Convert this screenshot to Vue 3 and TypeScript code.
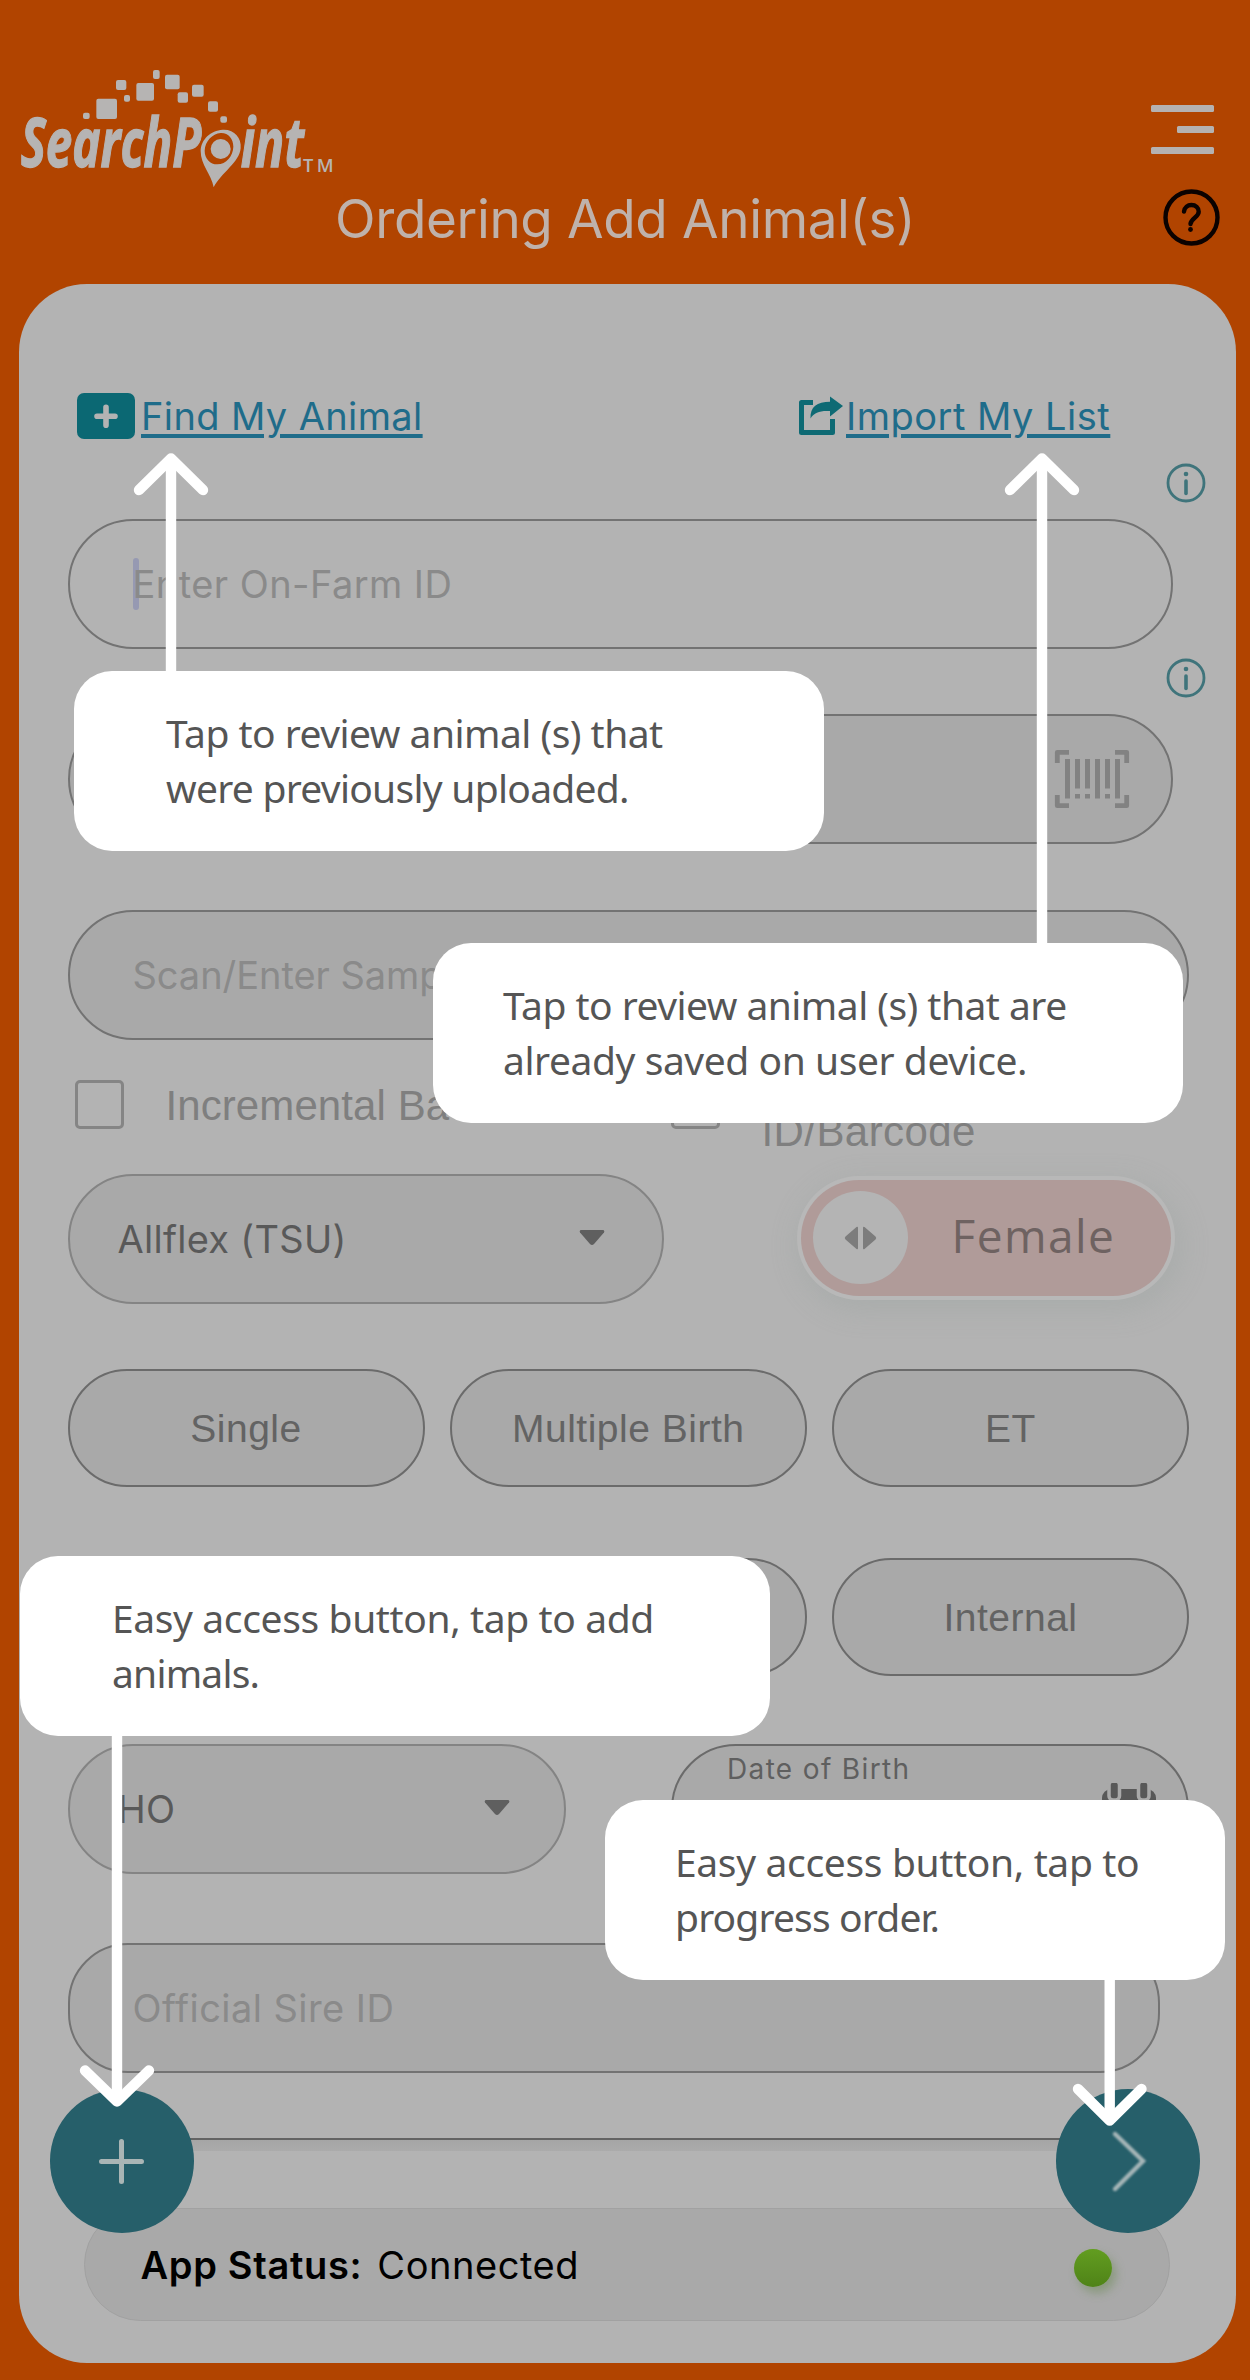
<script setup lang="ts">
interface CalloutLine {
  text: string
  tracking: number
}

interface Callout {
  id: string
  lines: CalloutLine[]
}

const callouts: Callout[] = [
  {
    id: 'find',
    lines: [
      { text: 'Tap to review animal (s) that', tracking: -0.52 },
      { text: 'were previously uploaded.', tracking: -0.73 },
    ],
  },
  {
    id: 'import',
    lines: [
      { text: 'Tap to review animal (s) that are', tracking: -0.53 },
      { text: 'already saved on user device.', tracking: -0.44 },
    ],
  },
  {
    id: 'add',
    lines: [
      { text: 'Easy access button, tap to add', tracking: -0.38 },
      { text: 'animals.', tracking: -0.8 },
    ],
  },
  {
    id: 'progress',
    lines: [
      { text: 'Easy access button, tap to', tracking: -0.35 },
      { text: 'progress order.', tracking: -0.85 },
    ],
  },
]

const birthTypes: string[] = ['Single', 'Multiple Birth', 'ET']
const sireTypes: string[] = ['', '', 'Internal']

const logoSquares: number[][] = [
  [249, 188, 20, 19],
  [289, 146, 62, 61],
  [348, 90, 31, 30],
  [372, 135, 18, 20],
  [409, 99, 53, 53],
  [459, 60, 20, 27],
  [495, 74, 44, 44],
  [533, 127, 31, 31],
  [576, 104, 35, 36],
  [624, 154, 30, 31],
  [661, 199, 20, 19],
]

const barcodeBars: { x: number; split: boolean }[] = [
  { x: 11, split: false },
  { x: 21, split: true },
  { x: 31, split: true },
  { x: 41, split: false },
  { x: 51, split: true },
  { x: 61, split: false },
]
</script>

<template>
  <div class="screen">
    <header class="header">
      <div class="brand-row">
        <svg class="logo" viewBox="0 0 1050 417" fill="#b6b4b3">
          <rect v-for="(s, i) in logoSquares" :key="i" :x="s[0]" :y="s[1]" :width="s[2]" :height="s[3]" rx="6" />
          <text class="logo-text" x="62" y="352" textLength="542" lengthAdjust="spacingAndGlyphs">SearchP</text>
          <text class="logo-text" x="722" y="352" textLength="190" lengthAdjust="spacingAndGlyphs">int</text>
          <text class="logo-tm" x="909" y="366" textLength="92" lengthAdjust="spacing">TM</text>
          <path
            fill-rule="evenodd"
            d="M668 239C702 237 725 262 722 295C718 338 664 368 641 412C634 372 602 345 602 303C603 268 632 241 668 239ZM662 249C637 251 615 274 614 302C614 326 630 343 652 343C679 342 699 319 700 290C700 266 685 248 662 249Z"
          />
          <ellipse cx="662" cy="297" rx="30" ry="30" />
        </svg>
        <div class="menu"><i></i><i class="short"></i><i></i></div>
      </div>
      <div class="title-row">
        <h1 class="title">Ordering Add Animal(s)</h1>
        <svg class="help" viewBox="0 0 57 57" fill="none" stroke="#0b0200">
          <circle cx="28.5" cy="28.5" r="26" stroke-width="4.4" />
          <path d="M21 22.500c.6-4.400 3.800-6.500 7.300-6.500 4.400 0 7.400 2.800 7.400 6.700 0 5.600-7.700 6.300-8.200 12.300" stroke-width="4.400" stroke-linecap="round" />
          <circle cx="27.500" cy="40.500" r="2.400" fill="#0b0200" stroke="none" />
        </svg>
      </div>
    </header>

    <main class="card">
      <div class="links">
        <div class="link-find">
          <svg class="plus-box" viewBox="0 0 58 46">
            <rect width="58" height="46" rx="7" fill="#0b6873" />
            <path d="M29 14.200v18M20 23.200h18" stroke="#b3b3b3" stroke-width="5.600" stroke-linecap="round" />
          </svg>
          <a class="link">Find My Animal</a>
        </div>
        <div class="link-import">
          <svg class="share" viewBox="0 0 46 46">
            <path d="M14 9.500H2.500V39.500H33.500V26" fill="none" stroke="#0e6a74" stroke-width="5" stroke-linejoin="round" />
            <path d="M11.500 25.500C11 14 18 8.800 31 8.800V3.500L44 13 31 23.500V18C21 17.500 15.500 19 11.500 25.500Z" fill="#0e6a74" />
          </svg>
          <a class="link import-text">Import My List</a>
        </div>
      </div>

      <svg class="info info-first" viewBox="0 0 40 40">
        <circle cx="20" cy="20" r="18" fill="none" stroke="#3f747b" stroke-width="2.800" />
        <path d="M20 18v12.500" stroke="#3f747b" stroke-width="3.600" stroke-linecap="round" />
        <circle cx="20" cy="11" r="2.300" fill="#3f747b" />
      </svg>

      <div class="field farm">
        <span class="cursor"></span>
        <span class="placeholder">Enter On-Farm ID</span>
      </div>

      <svg class="info info-second" viewBox="0 0 40 40">
        <circle cx="20" cy="20" r="18" fill="none" stroke="#3f747b" stroke-width="2.800" />
        <path d="M20 18v12.500" stroke="#3f747b" stroke-width="3.600" stroke-linecap="round" />
        <circle cx="20" cy="11" r="2.300" fill="#3f747b" />
      </svg>

      <div class="field filled official">
        <svg class="barcode" viewBox="0 0 76 60" fill="#828282">
          <path
            d="M3.300 14V3.300H15M61 3.300H72.700V14M72.700 46V56.700H61M15 56.700H3.300V46"
            fill="none"
            stroke="#828282"
            stroke-width="4.800"
            stroke-linejoin="round"
          />
          <template v-for="bar in barcodeBars" :key="bar.x">
            <rect :x="bar.x" y="10" width="5" :height="bar.split ? 29.5 : 39.5" />
            <rect v-if="bar.split" :x="bar.x" y="45" width="5" height="4.5" />
          </template>
        </svg>
      </div>

      <div class="field filled sample">
        <span class="placeholder tight">Scan/Enter Samp</span>
      </div>

      <div class="checks">
        <span class="checkbox"></span>
        <span class="check-label incremental">Incremental Ba</span>
        <span class="checkbox second"></span>
        <span class="check-label id-label">ID/Barcode</span>
      </div>

      <div class="row type-row">
        <div class="select type-select">
          <span class="value">Allflex (TSU)</span>
          <svg class="caret" viewBox="0 0 26 16"><path d="M1.500 0H24.500Q26 1 25 2.500L15 14Q13 16 11 14L1 2.500Q0 1 1.500 0Z" fill="#5f5f5f" /></svg>
        </div>
        <div class="toggle">
          <span class="knob">
            <svg viewBox="0 0 34 24" width="34" height="24" fill="#7c7c7c">
              <path d="M12.500 1Q14 0 14 2V22Q14 24 12.500 23L1.500 13.500Q0 12 1.500 10.500ZM20.500 1Q19 0 19 2V22Q19 24 20.500 23L31.500 13.500Q33 12 31.500 10.500Z" />
            </svg>
          </span>
          <span class="toggle-label">Female</span>
        </div>
      </div>

      <div class="row pills birth">
        <button v-for="type in birthTypes" :key="type" class="pill">{{ type }}</button>
      </div>

      <div class="row pills sire">
        <button v-for="(type, i) in sireTypes" :key="i" class="pill">{{ type }}</button>
      </div>

      <div class="row breed-row">
        <div class="select breed-select">
          <span class="value">HO</span>
          <svg class="caret" viewBox="0 0 26 16"><path d="M1.500 0H24.500Q26 1 25 2.500L15 14Q13 16 11 14L1 2.500Q0 1 1.500 0Z" fill="#5f5f5f" /></svg>
        </div>
        <div class="date">
          <span class="date-label">Date of Birth</span>
          <svg class="calendar" viewBox="0 0 54 54">
            <rect y="6" width="54" height="48" rx="9" fill="#585858" />
            <g fill="#585858" stroke="#a9a9a9" stroke-width="3.500">
              <rect x="7" y="-2" width="10.500" height="19" rx="4" />
              <rect x="36.500" y="-2" width="10.500" height="19" rx="4" />
            </g>
          </svg>
        </div>
      </div>

      <div class="field filled sire-id">
        <span class="placeholder">Official Sire ID</span>
      </div>

      <div class="next-field"></div>

      <footer class="status">
        <span class="status-name">App Status:</span>
        <span class="status-value">Connected</span>
        <span class="status-dot"></span>
      </footer>
    </main>

    <button class="fab fab-add">
      <svg viewBox="0 0 144 144" fill="none" stroke="#a9b5b5" stroke-width="5" stroke-linecap="round">
        <path d="M71.500 52.500v40M51.500 72.500h40" />
      </svg>
    </button>
    <button class="fab fab-next">
      <svg class="soft" viewBox="0 0 144 144" fill="none" stroke="#a6b6b8" stroke-width="4.400" stroke-linecap="round">
        <path d="M59 45L87 72 59 100" />
      </svg>
    </button>

    <svg class="arrows" viewBox="0 0 1250 2380" fill="none" stroke="#fff" stroke-width="10.400">
      <path d="M171 680V462M1042 950V462M117 1730V2098M1109.700 1975V2117" />
      <g stroke-linecap="round" stroke-linejoin="round">
        <path d="M139 490L171 458.500 203 490M1010 490L1042 458.500 1074 490" />
        <path d="M85 2070.500L117 2101.500 149 2070.500M1078 2089L1109.700 2120.500 1141.500 2089" />
      </g>
    </svg>

    <section v-for="callout in callouts" :key="callout.id" class="callout" :class="'callout-' + callout.id">
      <p v-for="line in callout.lines" :key="line.text" :style="{ letterSpacing: line.tracking + 'px' }">{{ line.text }}</p>
    </section>
  </div>
</template>

<style>
body {
  margin: 0;
  background: #b14400;
}
</style>

<style scoped>
.screen {
  position: relative;
  width: 1250px;
  height: 2380px;
  overflow: hidden;
  background: #b14400;
  font-family: Inter, 'Liberation Sans', sans-serif;
  box-sizing: border-box;
}
.screen * {
  box-sizing: border-box;
}
.header {
  height: 284px;
  padding-top: 50px;
}
.brand-row {
  display: flex;
  justify-content: space-between;
  height: 139px;
}
.logo {
  width: 350px;
  height: 139px;
}
.logo-text {
  font: italic 700 206px 'Open Sans', sans-serif;
  stroke: #b6b4b3;
  stroke-width: 4px;
}
.logo-tm {
  font: 600 55px 'Open Sans', sans-serif;
}
.menu {
  display: flex;
  flex-direction: column;
  align-items: flex-end;
  gap: 14px;
  margin: 55px 36px 0 0;
}
.menu i {
  width: 63px;
  height: 7px;
  border-radius: 1.5px;
  background: #b5b2b1;
}
.menu .short {
  width: 37px;
}
.title-row {
  display: flex;
  justify-content: space-between;
  height: 60px;
}
.title {
  margin: 0 0 0 335px;
  font-size: 53px;
  font-weight: 400;
  line-height: 60px;
  letter-spacing: -0.36px;
  color: #bfb2ab;
  white-space: nowrap;
}
.help {
  width: 57px;
  height: 57px;
  margin-right: 30px;
}
.card {
  display: flex;
  flex-direction: column;
  height: 2079px;
  margin: 0 14px 0 18.5px;
  padding: 109px 0 0 49px;
  border-radius: 68px;
  background: #b3b3b3;
}
.links {
  display: flex;
  height: 46px;
  padding-left: 9.5px;
}
.link-find {
  display: flex;
  width: 722px;
}
.link-import {
  display: flex;
}
.plus-box {
  width: 58px;
  height: 46px;
  margin-right: 6px;
}
.share {
  width: 46px;
  height: 46px;
  margin-right: 1px;
}
.link {
  font-size: 38px;
  line-height: 46px;
  letter-spacing: 0.38px;
  color: #1f6c8a;
  text-decoration: underline;
  text-decoration-thickness: 3.5px;
  text-underline-offset: 4px;
  white-space: nowrap;
}
.import-text {
  letter-spacing: 0.5px;
}
.info {
  flex: none;
  align-self: flex-end;
  width: 40px;
  height: 40px;
  margin-right: 30px;
}
.info-first {
  margin-top: 24px;
  margin-bottom: 16px;
}
.info-second {
  margin-top: 9px;
  margin-bottom: 16px;
}
.field {
  flex: none;
  display: flex;
  align-items: center;
  width: 1105px;
  height: 130px;
  padding-left: 63px;
  border: 2px solid #737373;
  border-radius: 65px;
}
.filled {
  background: #a9a9a9;
}
.placeholder {
  font-size: 38px;
  letter-spacing: 0.44px;
  color: #8a8a8a;
  white-space: nowrap;
}
.tight {
  letter-spacing: -0.05px;
}
.cursor {
  width: 6px;
  height: 52px;
  margin-right: -6px;
  border-radius: 3px;
  background: #9699b2;
}
.official {
  justify-content: flex-end;
  padding-right: 41px;
}
.barcode {
  width: 76px;
  height: 60px;
}
.sample {
  width: 1121.5px;
  margin-top: 66px;
}
.checks {
  flex: none;
  display: flex;
  height: 49px;
  margin: 40px 0 0 7.5px;
}
.checkbox {
  flex: none;
  width: 49px;
  height: 49px;
  border: 3px solid #858585;
  border-radius: 5px;
}
.check-label {
  font-family: 'Liberation Sans', sans-serif;
  font-size: 42px;
  line-height: 50px;
  color: #7f7f7f;
  white-space: nowrap;
}
.incremental {
  width: 385.5px;
  margin: 1px 0 0 41.5px;
  letter-spacing: 0.09px;
}
.second {
  margin-left: 120px;
}
.id-label {
  margin: 27px 0 0 41.5px;
  letter-spacing: 0.42px;
}
.row {
  flex: none;
  display: flex;
  width: 1121.5px;
}
.type-row {
  justify-content: space-between;
  align-items: center;
  height: 130px;
  margin-top: 45px;
}
.select {
  display: flex;
  align-items: center;
  justify-content: space-between;
  height: 130px;
  padding: 0 57px 0 48px;
  border: 2px solid #848484;
  border-radius: 65px;
  background: #a9a9a9;
}
.type-select {
  width: 596px;
}
.value {
  font-size: 38px;
  letter-spacing: 0.28px;
  color: #595959;
}
.caret {
  width: 26px;
  height: 16px;
  margin-top: -3px;
}
.toggle {
  display: flex;
  align-items: center;
  width: 370px;
  height: 116px;
  margin: -3px 18px 0 0;
  padding-left: 12px;
  border-radius: 58px;
  background: #b09b99;
  box-shadow: 0 0 0 4px #b8b8b8, 4px 8px 26px 8px rgba(150, 158, 155, 0.3);
}
.knob {
  display: flex;
  align-items: center;
  justify-content: center;
  width: 95px;
  height: 93px;
  border-radius: 50%;
  background: #b4b4b4;
}
.toggle-label {
  margin: -6px 0 0 43.5px;
  font-family: 'Open Sans', 'Noto Sans', sans-serif;
  font-size: 46px;
  letter-spacing: 1.45px;
  color: #6e6261;
}
.pills {
  justify-content: space-between;
}
.birth {
  margin-top: 65px;
}
.sire {
  margin-top: 71px;
}
.pill {
  width: 357px;
  height: 118px;
  padding: 2px 0 0;
  border: 2px solid #6b6b6b;
  border-radius: 59px;
  background: #a9a9a9;
  font-family: 'Liberation Sans', sans-serif;
  font-size: 39px;
  letter-spacing: 0.5px;
  color: #636363;
}
.breed-row {
  justify-content: space-between;
  margin-top: 68px;
}
.breed-select {
  width: 498px;
  padding-right: 54px;
}
.date {
  display: flex;
  justify-content: space-between;
  width: 518px;
  height: 130px;
  padding: 6px 31px 0 54px;
  border: 2px solid #6b6b6b;
  border-radius: 65px;
  background: #a9a9a9;
}
.date-label {
  font-size: 28px;
  line-height: 34px;
  letter-spacing: 1.35px;
  color: #5f5f5f;
}
.calendar {
  width: 54px;
  height: 54px;
  margin-top: 31px;
}
.sire-id {
  width: 1092px;
  margin-top: 68.5px;
  border-radius: 60px;
}
.next-field {
  flex: none;
  width: 1092px;
  height: 13px;
  margin-top: 65px;
  border-top: 2px solid #646464;
  background: linear-gradient(#a5a5a5, #ababab);
}
.status {
  flex: none;
  display: flex;
  align-items: center;
  width: 1086px;
  height: 113px;
  margin: 57.5px 0 0 16.5px;
  padding: 0 57px 0 55.5px;
  border: 1.5px solid #a1a1a1;
  border-radius: 57px;
  background: #a9a9a9;
  color: #000;
  font-size: 38px;
}
.status-name {
  font-weight: 600;
  letter-spacing: 0.67px;
}
.status-value {
  flex: 1;
  margin-left: 15px;
  letter-spacing: 0.56px;
}
.status-dot {
  width: 38px;
  height: 38px;
  margin-top: 6px;
  border-radius: 50%;
  background: linear-gradient(#629d20, #4f8318);
  box-shadow: 4px 6px 10px rgba(90, 130, 60, 0.4);
}
.fab {
  position: absolute;
  top: 2089px;
  width: 144px;
  height: 143.5px;
  padding: 0;
  border: 0;
  border-radius: 50%;
  background: #265f6a;
}
.fab svg {
  display: block;
}
.fab-add {
  left: 50px;
}
.fab-next {
  left: 1056px;
}
.soft {
  filter: blur(0.8px);
}
.arrows {
  position: absolute;
  top: 0;
  left: 0;
  width: 1250px;
  height: 2380px;
}
.callout {
  position: absolute;
  width: 750px;
  height: 180px;
  padding: 33.5px 0 0 92px;
  border-radius: 38px;
  background: #fff;
}
.callout p {
  margin: 0;
  font-family: 'Noto Sans', sans-serif;
  font-size: 39px;
  line-height: 55px;
  color: #555;
  white-space: nowrap;
}
.callout-find {
  top: 671px;
  left: 74px;
}
.callout-import {
  top: 943px;
  left: 433px;
  padding-left: 70px;
}
.callout-add {
  top: 1556px;
  left: 20px;
}
.callout-progress {
  top: 1800px;
  left: 605px;
  width: 620px;
  padding-left: 70px;
}
</style>
